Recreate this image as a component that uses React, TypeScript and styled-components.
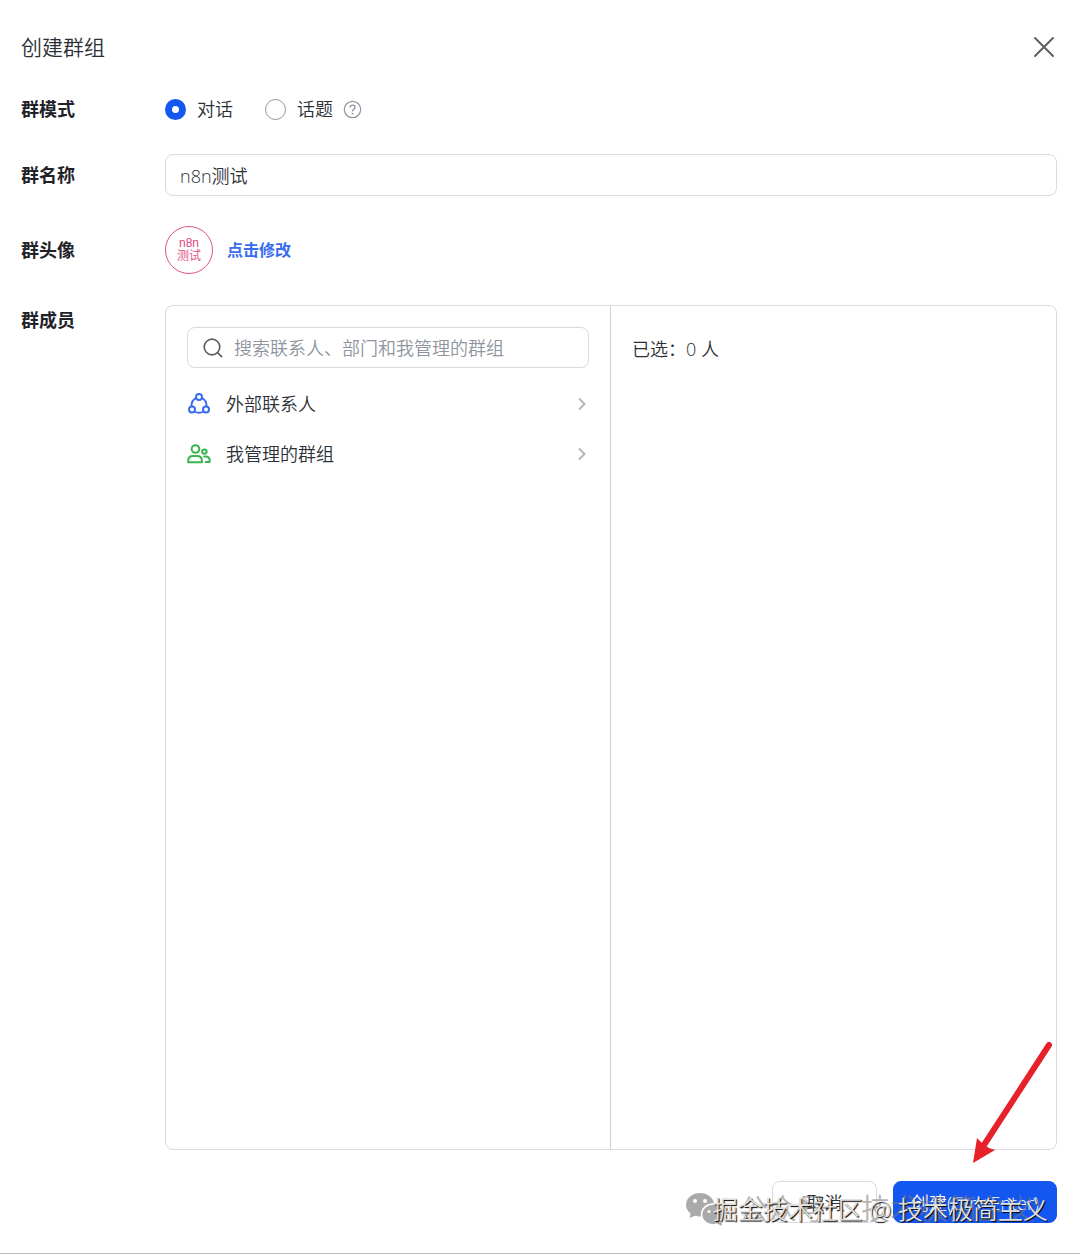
import React, { useState } from "react";
import styled, { createGlobalStyle } from "styled-components";

const GlobalStyle = createGlobalStyle`
  * { box-sizing: border-box; }
  body {
    margin: 0;
    background: #fff;
    color: #2b2f36;
    font-family: "Open Sans", "Noto Sans CJK SC", sans-serif;
    font-weight: 350;
    font-size: 18px;
    line-height: 24px;
  }
  button, input { font: inherit; color: inherit; }
`;

const Dialog = styled.main`
  position: relative;
  display: flex;
  flex-direction: column;
  min-height: 100vh;
  padding: 31px 23px 30px 21px;
  border-bottom: 1px solid #bbb;
`;

const Header = styled.header`
  display: flex;
  align-items: center;
  justify-content: space-between;
  height: 32px;
  margin-bottom: 29px;
`;

const Title = styled.h1`
  margin: 0;
  font-size: 21px;
  font-weight: 350;
  line-height: 32px;
`;

const CloseButton = styled.button`
  display: flex;
  padding: 0;
  border: 0;
  background: none;
  cursor: pointer;
  svg { display: block; }
`;

const Form = styled.form`
  display: flex;
  flex: 1;
  flex-direction: column;
`;

const Field = styled.div<{ $gap?: number; $fill?: boolean }>`
  display: grid;
  grid-template-columns: 144px minmax(0, 1fr);
  align-items: ${(p) => (p.$fill ? "stretch" : "center")};
  flex: ${(p) => (p.$fill ? "1" : "none")};
  margin-bottom: ${(p) => p.$gap ?? 32}px;
`;

const Label = styled.label`
  font-weight: 700;
  color: #1f2329;
`;

const GroupLabel = styled.span`
  font-weight: 700;
  color: #1f2329;
`;

const MemberLabel = styled(GroupLabel)`
  padding-top: 3px;
`;

const RadioGroup = styled.div`
  display: flex;
  align-items: center;
  height: 34px;
`;

const RadioLabel = styled.label`
  display: flex;
  align-items: center;
  gap: 11px;
  margin-right: 32px;
  & + & { margin-right: 10px; }
`;

const Radio = styled.input`
  appearance: none;
  width: 21px;
  height: 21px;
  margin: 0;
  border: 1px solid #8f959e;
  border-radius: 50%;
  background: #fff;
  &:checked { border: 7px solid #1456f0; }
`;

const NameInput = styled.input`
  width: 100%;
  height: 42px;
  padding: 0 14px;
  border: 1px solid #d8dadd;
  border-radius: 8px;
  background: #fff;
`;

const AvatarRow = styled.div`
  display: flex;
  align-items: center;
  gap: 14px;
`;

const Avatar = styled.div`
  display: flex;
  flex-direction: column;
  align-items: center;
  justify-content: center;
  width: 48px;
  height: 48px;
  border: 1px solid #e0558a;
  border-radius: 50%;
  color: #e0457f;
  font-family: "Liberation Sans", "Noto Sans CJK SC", sans-serif;
  font-size: 12px;
  line-height: 13px;
`;

const EditLink = styled.a`
  color: #3a6cf0;
  font-size: 16px;
  font-weight: 700;
  text-decoration: none;
`;

const Picker = styled.div`
  display: grid;
  grid-template-columns: 1fr 1fr;
  border: 1px solid #d8dadd;
  border-radius: 8px;
`;

const Source = styled.section`
  padding: 21px;
  border-right: 1px solid #cfd1d4;
`;

const SearchBox = styled.label`
  display: flex;
  align-items: center;
  gap: 11px;
  height: 41px;
  margin-bottom: 11px;
  padding: 0 15px;
  border: 1px solid #d8dadd;
  border-radius: 8px;
`;

const SearchInput = styled.input`
  flex: 1;
  min-width: 0;
  padding: 0;
  border: 0;
  outline: 0;
  background: none;
  &::placeholder { color: #8f959e; opacity: 1; }
`;

const SourceItem = styled.button`
  display: grid;
  grid-template-columns: 24px 1fr 14px;
  align-items: center;
  gap: 15px;
  width: 100%;
  height: 50px;
  padding: 0;
  border: 0;
  background: none;
  text-align: left;
  cursor: pointer;
  svg { display: block; }
`;

const Selected = styled.section`
  padding: 31px 21px;
`;

const Footer = styled.footer`
  display: flex;
  justify-content: flex-end;
  gap: 16px;
`;

const FooterButton = styled.button<{ $primary?: boolean }>`
  width: ${(p) => (p.$primary ? 164 : 105)}px;
  height: 42px;
  padding: 2px 0 0;
  border: 1px solid ${(p) => (p.$primary ? "#1456f0" : "#d8dadd")};
  border-radius: 8px;
  background: ${(p) => (p.$primary ? "#1456f0" : "#fff")};
  color: ${(p) => (p.$primary ? "#fff" : "#2b2f36")};
  white-space: nowrap;
`;

const Arrow = styled.svg`
  position: absolute;
  right: 26px;
  bottom: 89px;
  pointer-events: none;
`;

const AccountMark = styled.div`
  position: absolute;
  right: 45px;
  bottom: 24px;
  display: flex;
  align-items: center;
  gap: 14px;
  color: #777;
  font-size: 29px;
  line-height: 40px;
  white-space: nowrap;
  opacity: 0.55;
  pointer-events: none;
`;

const CommunityMark = styled.div`
  position: absolute;
  right: 32px;
  bottom: 26px;
  color: #e0e0e0;
  font-size: 25px;
  line-height: 36px;
  text-shadow: 1px 1px 1px #000;
  white-space: nowrap;
  pointer-events: none;
`;

const Chevron = () => (
  <svg width="14" height="14" viewBox="0 0 14 14" fill="none" stroke="#b4b7bc" strokeWidth="2">
    <path d="M4 1.5 9.5 7 4 12.5" />
  </svg>
);

export default function App() {
  const [mode, setMode] = useState("chat");
  const [name, setName] = useState("n8n测试");

  return (
    <Dialog>
      <GlobalStyle />
      <Header>
        <Title>创建群组</Title>
        <CloseButton type="button" aria-label="关闭">
          <svg width="26" height="26" viewBox="0 0 26 26" stroke="#5c6066" strokeWidth="2" strokeLinecap="round">
            <path d="m4 4 18 18M22 4 4 22" />
          </svg>
        </CloseButton>
      </Header>
      <Form onSubmit={(e) => e.preventDefault()}>
        <Field $gap={28}>
          <GroupLabel id="mode-label">群模式</GroupLabel>
          <RadioGroup role="radiogroup" aria-labelledby="mode-label">
            <RadioLabel>
              <Radio type="radio" name="mode" checked={mode === "chat"} onChange={() => setMode("chat")} />
              对话
            </RadioLabel>
            <RadioLabel>
              <Radio type="radio" name="mode" checked={mode === "topic"} onChange={() => setMode("topic")} />
              话题
            </RadioLabel>
            <svg width="19" height="19" viewBox="0 0 19 19" fill="none" stroke="#8f959e" strokeWidth="1.2">
              <circle cx="9.5" cy="9.5" r="8.2" />
              <path d="M7 7.5c0-1.5 1-2.4 2.5-2.4s2.6.9 2.6 2.3c0 1.8-2.6 1.9-2.6 4" strokeWidth="1.4" />
              <circle cx="9.5" cy="13.6" r=".9" fill="#8f959e" stroke="none" />
            </svg>
          </RadioGroup>
        </Field>
        <Field $gap={30}>
          <Label htmlFor="group-name">群名称</Label>
          <NameInput id="group-name" value={name} onChange={(e) => setName(e.target.value)} />
        </Field>
        <Field $gap={31}>
          <GroupLabel>群头像</GroupLabel>
          <AvatarRow>
            <Avatar><span>n8n</span><span>测试</span></Avatar>
            <EditLink href="#avatar">点击修改</EditLink>
          </AvatarRow>
        </Field>
        <Field $fill $gap={31}>
          <MemberLabel>群成员</MemberLabel>
          <Picker>
            <Source>
              <SearchBox>
                <svg width="20" height="20" viewBox="0 0 20 20" fill="none" stroke="#5c6066" strokeWidth="1.7" strokeLinecap="round">
                  <circle cx="9" cy="9" r="7.8" />
                  <path d="m14.6 14.6 4 4" />
                </svg>
                <SearchInput type="text" aria-label="搜索" placeholder="搜索联系人、部门和我管理的群组" />
              </SearchBox>
              <SourceItem type="button">
                <svg width="24" height="24" viewBox="0 0 24 24" fill="none" stroke="#3a6cf0" strokeWidth="2">
                  <circle cx="12" cy="5" r="3" />
                  <circle cx="5" cy="17.500" r="3" />
                  <circle cx="19" cy="17.500" r="3" />
                  <path d="M9.200 5.800C6 7.400 4.300 10.500 4.400 14.500M14.800 5.800c3.200 1.600 4.900 4.700 4.800 8.700M7.500 19.500c2.700 1.600 6.300 1.600 9 0" />
                </svg>
                外部联系人
                <Chevron />
              </SourceItem>
              <SourceItem type="button">
                <svg width="24" height="24" viewBox="0 0 24 24" fill="none" stroke="#39b54f" strokeWidth="2" strokeLinejoin="round" strokeLinecap="round">
                  <circle cx="8.500" cy="7" r="3.800" />
                  <path d="M1.200 20.300v-1.500c0-3 2-4.700 4.800-4.700h4.200c2.800 0 4.700 1.700 4.700 4.700v1.500z" />
                  <circle cx="17.400" cy="9.600" r="2.200" />
                  <path d="M17.300 14.600h1.200c2.500 0 4.200 1.500 4.200 4v1.500h-4" />
                </svg>
                我管理的群组
                <Chevron />
              </SourceItem>
            </Source>
            <Selected>已选：0 人</Selected>
          </Picker>
        </Field>
        <Footer>
          <FooterButton type="button">取消</FooterButton>
          <FooterButton type="submit" $primary>创建(Ctrl+Enter)</FooterButton>
        </Footer>
      </Form>
      <Arrow width="84" height="124" viewBox="0 0 84 124">
        <path d="M79 5 14 105" stroke="#e6212a" strokeWidth="6" strokeLinecap="round" />
        <path d="M3 123 7 98l6 6 6 4 6 2z" fill="#e6212a" />
      </Arrow>
      <AccountMark>
        <svg width="40" height="35" viewBox="0 0 40 35" fill="#666">
          <path d="M6 19 4.700 26l7-3z" />
          <ellipse cx="15" cy="12.700" rx="14" ry="11.700" />
          <ellipse cx="28" cy="22.500" rx="11.500" ry="10.500" stroke="#fff" strokeWidth="1.500" />
          <path d="m31 31 6 3-1.500-7z" />
          <g fill="#fff"><circle cx="10" cy="9" r="2" /><circle cx="20" cy="9" r="2" /><circle cx="24" cy="19.500" r="1.600" /><circle cx="32" cy="19.500" r="1.600" /></g>
        </svg>
        <span>公众号</span>
        <span>·</span>
        <span>技术极简主义</span>
      </AccountMark>
      <CommunityMark>掘金技术社区 @ 技术极简主义</CommunityMark>
    </Dialog>
  );
}
